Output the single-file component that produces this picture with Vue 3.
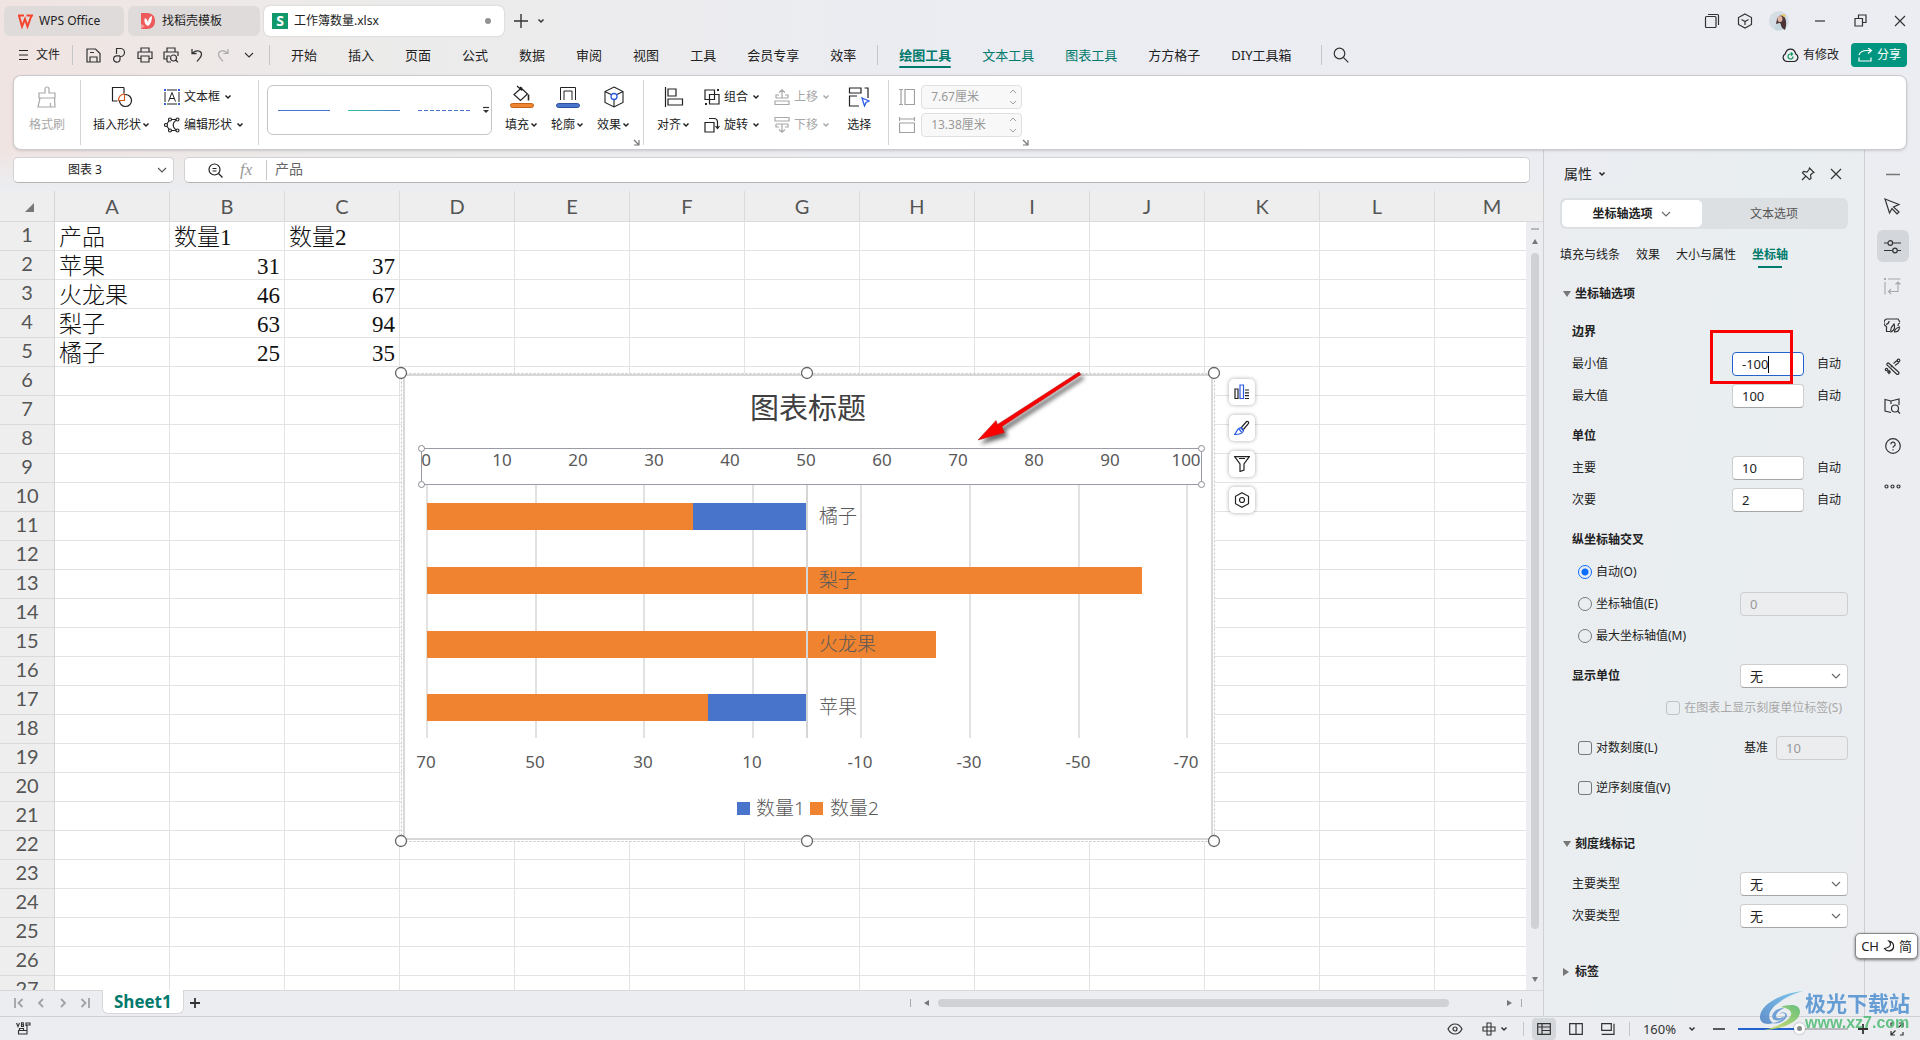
<script setup>
import { h, ref } from 'vue'

const icons = {
  chev: [8, 8, '<path d="M1.5 2.5 4 5l2.5-2.5" stroke-width="1.5"/>'],
  chevL: [12, 12, '<path d="M2 4l4 4 4-4" stroke-width="1.1"/>'],
  wps: [16, 16, '<path d="M1 2.5h6M9.500 2.500H16M2 2.500l3 11 3-7.500 2.500 7.500 4-11" stroke="#f5432c" stroke-width="2"/>'],
  dao: [14, 18, '<path d="M0 1h6c5 0 8 3 8 8s-3 8-8 8H0z" fill="#ee5a5c" stroke="none"/><path d="M0 12l4 2-4 3z" fill="#f89a9a" stroke="none"/><path d="M7 14C3 12 3 8 4 6c2 1 3 3 3 5 0-3 1-6 4-7 0 4-1 8-4 10z" fill="#fff" stroke="none"/>'],
  plus: [14, 14, '<path d="M7 0v14M0 7h14" stroke-width="1.4"/>'],
  menu: [9, 12, '<path d="M0 1.500h9M0 6h9M0 10.500h9" stroke-width="1"/>'],
  save: [15, 15, '<path d="M1 1h8.500L14 5.500V14H1zM4 14V9h7v5M4 4.500h4"/>'],
  exp: [14, 16, '<path d="M4.500 7V1.500h4a4 4 0 0 1 0 8H8M8 9.500V12a3.200 3.200 0 1 1-3.200-3.200H8"/>'],
  print: [16, 16, '<path d="M4 5V1h8v4M4 11.500H1V5h14v6.500h-3M4 9h8v6H4z"/>'],
  preview: [16, 16, '<path d="M4 5V1h8v4M4 12H1V5h14v4M4 15V9h3M4 15h4"/><circle cx="10.500" cy="11" r="3"/><path d="M12.800 13.300l2.200 2"/>'],
  undo: [14, 14, '<path d="M2 1v4.500h4.500M2.500 5.500C5 1.500 11.500 2 11.500 6.500c0 3-2.500 4-4.500 7" stroke-width="1.300"/>'],
  redo: [14, 14, '<path d="M12 1v4.500H7.500M11.500 5.500C9 1.500 2.500 2 2.500 6.500c0 3 2.500 4 4.500 7" stroke-width="1.200"/>'],
  search: [16, 16, '<circle cx="6.500" cy="6.500" r="5.300"/><path d="M10.300 10.300l5 5"/>'],
  pages: [16, 16, '<rect x="1.500" y="3.500" width="10.500" height="11" rx="1"/><path d="M4 1.500h9.500a1 1 0 0 1 1 1V12"/>'],
  cube: [16, 16, '<path d="M8 1l6.500 3.500v7L8 15l-6.500-3.500v-7zM4.500 6.500L8 8.500l3.500-2M8 8.500V12"/>'],
  min: [12, 12, '<path d="M1 6h10"/>'],
  restore: [13, 13, '<path d="M1 4.500h7.500V12H1zM4.500 4.500V1H12v7.500H8.500"/>'],
  close: [12, 12, '<path d="M1 1l10 10M11 1L1 11"/>'],
  cloud: [17, 15, '<path d="M5 13.500a4 4 0 0 1-1.800-7.500C4 3 6 1.200 8.500 1.200S13 3 13.800 6A4 4 0 0 1 12 13.500z"/><path d="M11 8.500A2.500 2.500 0 1 1 8.500 6l1.500 0M9 4.500L10.500 6 9 7.500" stroke="#0e9a5a"/>'],
  share: [15, 15, '<path d="M1 7c1-3 4-4.500 8-4.500h4M10 0l3.500 2.500L10 5.500M1 9.500V13h12V9.500"/>'],
  brush: [22, 24, '<path d="M9 8V4a2 2 0 0 1 4 0v4h6v5H3V8zM4 13L2 22h17l-.5-9M14.500 22v-4"/>'],
  shapes: [22, 22, '<path d="M13 1.500H1.500v13.500h5"/><path d="M13 1.500v6"/><circle cx="14.500" cy="14.500" r="6"/><path d="M7.500 14.500A6 6 0 0 1 13.500 8v6.500z" stroke="#d4571e" fill="#fff"/>'],
  textbox: [16, 16, '<path d="M3 1h10M3 15h10M1 3v10M15 3v10M4.500 12.500L8 3.500l3.500 9M5.800 9.500h4.400" stroke-width="1"/><path d="M0 0h2v2H0zM14 0h2v2h-2zM0 14h2v2H0zM14 14h2v2h-2z" fill="#2c5be8" stroke="none"/>'],
  edit: [16, 16, '<path d="M2 8l4-5.500M2 8l4 5.500M7 2.500h6M7 13.500h6M13 3c-5 2-5 8 0 10"/><g fill="#fff"><circle cx="2" cy="8" r="1.500"/><circle cx="6" cy="2.500" r="1.500"/><circle cx="6" cy="13.500" r="1.500"/><circle cx="13.500" cy="2.500" r="1.500"/><circle cx="13.500" cy="13.500" r="1.500"/></g>'],
  more: [8, 8, '<path d="M1 1.500h6" /><path d="M1 4h6L4 7z" fill="currentColor" stroke="none"/>'],
  fill: [24, 24, '<path d="M10 2l7.500 7-7 6.500L4 9.500 12 2.500M7 1l5 4.500"/><path d="M18.500 9.500v6" stroke-width="1.600"/><rect x=".5" y="18.500" width="23" height="4" rx="2" fill="#f08530" stroke="#c3621a" stroke-width="1"/>'],
  outline: [24, 24, '<path d="M4.500 15V2.500h15V15M8 15V6h8v9" stroke-width="1"/><rect x=".5" y="18.500" width="23" height="4" rx="2" fill="#4874cb" stroke="#2d529c" stroke-width="1"/>'],
  effect: [22, 22, '<path d="M11 1l9 4.500v11L11 21l-9-4.500v-11zM2 5.500l6 3M20 5.500l-6 3M11 14v7" stroke-width="1.100"/><circle cx="11" cy="10.500" r="3" stroke="#2c5be8" stroke-width="1.300"/>'],
  align: [20, 20, '<path d="M1.500 0v20M4 2h8v7H4zM4 12h14.500v6H4z"/>'],
  group: [16, 16, '<path d="M1 1h9.500v9.500H1zM5.500 5.500H15V15H5.500z"/><path d="M13 0h2v2h-2zM1 14h2v2H1z" fill="currentColor" stroke="none"/>'],
  rotate: [16, 16, '<path d="M1 5.500h9V15H1zM5 1.500h5c2.500 0 3.500 2 3.500 4V11M11.500 9l2 2.500L15.500 9"/>'],
  up: [16, 16, '<path d="M1 12h14v3.500H1zM2 9V6h3M14 9V6h-3M2 9h12M8 9V1M5 3.500L8 .800l3 2.700"/>'],
  down: [16, 16, '<path d="M1 .500h14V4H1zM2 7v3h3M14 7v3h-3M2 7h12M8 7v8M5 12.500l3 2.700 3-2.700"/>'],
  select: [22, 20, '<path d="M9 9H1.500v10H11M1.500 6V1H13v5zM16.500 1H20v10" stroke-width="1.200"/><path d="M14 11l7 3-3 1.500L16.500 19z" stroke="#2c5be8" fill="#fff" stroke-width="1.300"/>'],
  hgt: [16, 16, '<path d="M0 .500h4M0 15.500h4M2 .500v15M6 .500h9.500v15H6z"/>'],
  wid: [16, 16, '<path d="M.500 0v4M15.500 0v4M.500 2h15M.500 6h15v9.500H.500z"/>'],
  spin: [8, 16, '<path d="M1 4l3-3 3 3M1 12l3 3 3-3" stroke-width="1"/>'],
  launch: [7, 7, '<path d="M1 1l4.500 4.500M6 1v5H1" />'],
  zoomf: [15, 15, '<circle cx="6.500" cy="6.500" r="5.500"/><path d="M10.500 10.500l4 4M4.500 5.500h4M4.500 8h4"/>'],
  corner: [9, 9, '<path d="M9 0v9H0z" fill="#777" stroke="none"/>'],
  bars: [16, 16, '<path d="M1 5h3v9.500H1z"/><path d="M6 1h3.500v13.500H6z" stroke="#2c5be8"/><path d="M11 6h4M11 8.800h4M11 11.600h4M11 14.500h4"/>'],
  paint: [16, 16, '<path d="M7 8l5.500-6.500a1.500 1.500 0 0 1 2 2L9 10z"/><path d="M7 7.500l2.500 2.500c0 4-5 4.500-9 4.500 2.500-2 2-6.500 6.500-7zM5 9l2.500 3" stroke="#2c5be8"/>'],
  filter: [16, 16, '<path d="M.700 .700h14.600L10 8v6l-4 1.500V8zM5 2.500h6"/>'],
  gear: [16, 16, '<path d="M8 .700l6.500 3.600v7.400L8 15.300l-6.500-3.600V4.300z"/><circle cx="8" cy="8" r="2.500"/>'],
  pin: [14, 14, '<path d="M8.500 1l4.500 4.500-1.500.5-2 2 .5 3.500-1.500 1L1.500 6l1-1.500L6 5l2-2.500zM4.500 9.500L1 13"/>'],
  cursor: [17, 17, '<path d="M1 1l14 5.500-5.500 2.500 5.500 5-2 2-5-5.500L5.500 15z"/>'],
  props: [17, 15, '<path d="M0 4h4M9 4h8M0 11.500h8.500M13.500 11.500H17"/><circle cx="6.300" cy="4" r="2.300"/><circle cx="11" cy="11.500" r="2.300"/>'],
  swap: [17, 17, '<path d="M4 1h12.500M1 4v12.500M4.500 13.500H14V4M7 11l-2.500 2.500L7 16M11.500 6.500L14 4l2.500 2.500" stroke-width="1.100"/><path d="M0 0h2v2H0z" fill="currentColor" stroke="none"/>'],
  person: [17, 16, '<path d="M6 13.500H2.500V8.500A4 4 0 0 1 2.500 1H14l2 3M5 3c0 2-1 3-3 3.500M7 14c-1-3 1-6 3-8 1 3 1 6-3 8zM10.500 14c0-3 2-4 5-5 0 3-1 5-5 5zM14 8c0-2 1-3 2-3" stroke-width="1.200"/>'],
  wand: [17, 17, '<path d="M4.500 5L14.500 14a1.400 1.400 0 0 1-2 2L3 7a1.400 1.400 0 0 1 1.500-2zM7 9l1.500-1.500"/><path d="M9.500 5.500L13 2.500M11 7.500l4-3" stroke-width="1.100"/><circle cx="14.500" cy="2.500" r="1.300"/><circle cx="2.500" cy="11.500" r="1.200"/><path d="M5 12.500l1.300 1.500L5 15.500 3.700 14z"/>'],
  book: [17, 16, '<path d="M7 14.500L1 13V1.500l6 1.500 8-2v6M7 3v3"/><circle cx="11" cy="10.500" r="3.500"/><path d="M13.500 13l2.500 2.500"/>'],
  help: [16, 16, '<circle cx="8" cy="8" r="7.300"/><path d="M5.800 6.200a2.200 2.200 0 1 1 3.200 2c-.800.400-1 .800-1 1.600"/><path d="M8 11.200v1.400"/>'],
  dots: [17, 5, '<circle cx="2.500" cy="2.500" r="1.500"/><circle cx="8.500" cy="2.500" r="1.500"/><circle cx="14.500" cy="2.500" r="1.500"/>'],
  dash: [14, 3, '<path d="M0 1.500h14" stroke-width="1.500"/>'],
  first: [10, 10, '<path d="M1 0v10M8.500 1l-4 4 4 4" stroke-width="1.800"/>'],
  prev: [10, 10, '<path d="M7 1L3 5l4 4" stroke-width="1.800"/>'],
  next: [10, 10, '<path d="M3 1l4 4-4 4" stroke-width="1.800"/>'],
  last: [10, 10, '<path d="M9 0v10M1.500 1l4 4-4 4" stroke-width="1.800"/>'],
  add: [10, 10, '<path d="M5 0v10M0 5h10" stroke-width="1.800"/>'],
  macro: [15, 13, '<path d="M.5 1L2 4.500 3.500 1M5.500 .800v3.700h2V2.700h-2 1.800V.800zM10 4V1h4v2h-3v9H2.500V8.500h8M3.500 8.500v-2h4v2" stroke-width="1.100"/>'],
  eye: [16, 12, '<path d="M1 6c1.500-3 4-5 7-5s5.500 2 7 5c-1.500 3-4 5-7 5S2.500 9 1 6z"/><circle cx="8" cy="6" r="2"/>'],
  cross: [14, 14, '<path d="M5 5V1h4v4h4v4H9v4H5V9H1V5zM5 5h4v4H5z" stroke-width="1.100"/>'],
  vgrid: [14, 12, '<path d="M.700 .700h12.600v10.600H.700zM.700 4h12.600M5 .700v10.600M5 7.500h8"/>'],
  vbook: [14, 12, '<path d="M.700 .700h12.600v10.600H.700zM7 .700v10.600"/>'],
  vpage: [14, 12, '<path d="M.700 .700h9.600v6.600H.700zM13 .700v10.600H.700"/>'],
  minus: [12, 4, '<path d="M0 2h12" stroke-width="1.600"/>'],
  full: [14, 14, '<path d="M9 1h4v4M13 1L8.500 5.500M5 13H1V9M1 13l4.500-4.500M1 4V1h3M13 10v3h-3"/>'],
  moon: [12, 12, '<path d="M6 1c2.500 2.500 2.500 6-4.500 7.500 2 3.500 8 3 9-1C11.200 4 9 1.500 6 1z"/>'],
}
const Icon = (p) => {
  const [w, ht, d] = icons[p.n]
  return h('svg', {
    width: w, height: ht, viewBox: `0 0 ${w} ${ht}`, fill: 'none',
    stroke: 'currentColor', 'stroke-width': 1.2, 'aria-hidden': 'true', innerHTML: d,
  })
}
Icon.props = ['n']

const quick = ['save', 'exp', 'print', 'preview', 'undo', 'redo', 'chevL']
const menus = ['开始', '插入', '页面', '公式', '数据', '审阅', '视图', '工具', '会员专享', '效率']
const toolMenus = [
  { t: '绘图工具', c: 'on' }, { t: '文本工具', c: 'ctx' }, { t: '图表工具', c: 'ctx' },
  { t: '方方格子', c: '' }, { t: 'DIY工具箱', c: '' },
]
const cols = 'ABCDEFGHIJKLM'.split('')
const data = [['产品', '数量1', '数量2'], ['苹果', 31, 37], ['火龙果', 46, 67], ['梨子', 63, 94], ['橘子', 25, 35]]
const rows = Array.from({ length: 27 }, (_, r) => cols.map((_, c) => data[r]?.[c] ?? ''))

const topAxis = Array.from({ length: 11 }, (_, i) => ({ t: i * 10, x: 33 + i * 76 }))
const bottomAxis = [70, 50, 30, 10, -10, -30, -50, -70].map((t, i) => ({ t, x: 33 + Math.round(i * 108.6) }))
const bars = [
  { t: '橘子', y: 138, o: 266, b: 113 },
  { t: '梨子', y: 202, o: 715, b: 0 },
  { t: '火龙果', y: 266, o: 509, b: 0 },
  { t: '苹果', y: 329, o: 281, b: 98 },
]
const handles = [[8, 8], [414, 8], [821, 8], [8, 476], [414, 476], [821, 476]]
const chartTools = [['bars', '图表元素'], ['paint', '图表样式'], ['filter', '图表筛选器'], ['gear', '设置图表区域格式']]
const side = ['dash', 'cursor', 'props', 'swap', 'person', 'wand', 'book', 'help', 'dots']

const bounds = ref({ min: '-100', max: '100', major: '10', minor: '2' })
const cross = ref('auto')
const zoom = ref(57)
</script>

<template>
  <div class="app">
    <header class="titlebar">
      <button class="tab home"><Icon n="wps" />WPS Office</button>
      <button class="tab dao"><Icon n="dao" />找稻壳模板</button>
      <button class="tab doc"><span class="s-logo">S</span>工作簿数量.xlsx<i class="dot"></i></button>
      <button class="bare new" aria-label="新建"><Icon n="plus" /></button>
      <button class="bare" aria-label="更多标签"><Icon n="chev" /></button>
      <div class="win">
        <button class="bare" aria-label="窗口"><Icon n="pages" /></button>
        <button class="bare" aria-label="应用"><Icon n="cube" /></button>
        <button class="bare avatar" aria-label="账号">
          <svg width="20" height="20" viewBox="0 0 20 20">
            <circle cx="10" cy="10" r="10" fill="#d3dde3" />
            <path d="M8 8c1-4 6-5 8-1 2 4 1 9 0 12l-3-2-2-5-4 1z" fill="#4a3436" />
            <ellipse cx="11" cy="8" rx="2.500" ry="3" fill="#e0b6a6" />
            <path d="M12 4l3-1 2 2-2 1z" fill="#e2c65c" />
            <path d="M6 14l5-2 2 7H6z" fill="#c5d8e0" />
          </svg>
        </button>
        <button class="bare" aria-label="最小化"><Icon n="min" /></button>
        <button class="bare" aria-label="还原"><Icon n="restore" /></button>
        <button class="bare" aria-label="关闭"><Icon n="close" /></button>
      </div>
    </header>

    <nav class="menubar">
      <button class="bare file"><Icon n="menu" />文件</button>
      <i class="vr"></i>
      <div class="quick">
        <button v-for="q in quick" :key="q" class="bare" :class="{ off: q === 'redo' }" :aria-label="q"><Icon :n="q" /></button>
      </div>
      <i class="vr"></i>
      <div class="menus">
        <a v-for="m in menus" :key="m" href="#">{{ m }}</a>
      </div>
      <i class="vr mid"></i>
      <div class="menus tools">
        <a v-for="m in toolMenus" :key="m.t" href="#" :class="m.c">{{ m.t }}</a>
      </div>
      <i class="vr find"></i>
      <button class="bare" aria-label="搜索"><Icon n="search" /></button>
      <button class="bare state"><Icon n="cloud" />有修改</button>
      <button class="share"><Icon n="share" />分享</button>
    </nav>

    <section class="ribbon">
      <div class="grp g1">
        <button class="big off"><span><Icon n="brush" /></span><b>格式刷</b></button>
      </div>
      <i class="sep"></i>
      <div class="grp g2">
        <button class="big"><span><Icon n="shapes" /></span><b>插入形状<Icon n="chev" /></b></button>
        <div class="stack">
          <button class="row"><Icon n="textbox" />文本框<Icon n="chev" /></button>
          <button class="row"><Icon n="edit" />编辑形状<Icon n="chev" /></button>
        </div>
      </div>
      <i class="sep"></i>
      <div class="grp g3">
        <div class="gallery">
          <button aria-label="实线" class="ln blue"></button>
          <button aria-label="渐变线" class="ln grad"></button>
          <button aria-label="虚线" class="ln dashed"></button>
          <button aria-label="更多线型" class="bare"><Icon n="more" /></button>
        </div>
        <button class="big"><span><Icon n="fill" /></span><b>填充<Icon n="chev" /></b></button>
        <button class="big"><span><Icon n="outline" /></span><b>轮廓<Icon n="chev" /></b></button>
        <button class="big"><span><Icon n="effect" /></span><b>效果<Icon n="chev" /></b></button>
      </div>
      <button class="bare launch" aria-label="形状样式"><Icon n="launch" /></button>
      <i class="sep"></i>
      <div class="grp g4">
        <button class="big"><span><Icon n="align" /></span><b>对齐<Icon n="chev" /></b></button>
        <div class="stack">
          <button class="row"><Icon n="group" />组合<Icon n="chev" /></button>
          <button class="row"><Icon n="rotate" />旋转<Icon n="chev" /></button>
        </div>
        <div class="stack">
          <button class="row off"><Icon n="up" />上移<Icon n="chev" /></button>
          <button class="row off"><Icon n="down" />下移<Icon n="chev" /></button>
        </div>
        <button class="big pick"><span><Icon n="select" /></span><b>选择</b></button>
      </div>
      <i class="sep"></i>
      <div class="grp g5">
        <div class="stack">
          <label class="size"><Icon n="hgt" /><span><input value="7.67厘米" disabled aria-label="高度" /><Icon n="spin" /></span></label>
          <label class="size"><Icon n="wid" /><span><input value="13.38厘米" disabled aria-label="宽度" /><Icon n="spin" /></span></label>
        </div>
      </div>
      <button class="bare launch" aria-label="大小"><Icon n="launch" /></button>
    </section>

    <div class="main">
      <div class="work">
        <div class="fbar">
          <div class="namebox"><input value="图表 3" aria-label="名称框" /><Icon n="chevL" /></div>
          <div class="formula">
            <Icon n="zoomf" /><em>fx</em><i class="vr"></i>
            <input value="产品" aria-label="编辑栏" />
          </div>
        </div>

        <div class="sheet">
          <div class="cells">
            <table>
              <thead>
                <tr><th class="corner"><Icon n="corner" /></th><th v-for="c in cols" :key="c">{{ c }}</th></tr>
              </thead>
              <tbody>
                <tr v-for="(r, i) in rows" :key="i">
                  <th>{{ i + 1 }}</th>
                  <td v-for="(v, j) in r" :key="j" :class="{ num: typeof v === 'number' }">{{ v }}</td>
                </tr>
              </tbody>
            </table>

            <svg class="chart" width="830" height="486" viewBox="0 0 830 486">
              <defs>
                <filter id="sh" x="-20%" y="-20%" width="150%" height="150%">
                  <feDropShadow dx="3" dy="4" stdDeviation="2" flood-color="#000" flood-opacity="0.6" />
                </filter>
              </defs>
              <rect x="8.500" y="8.500" width="813" height="468" fill="#fff" stroke="#c4c4c8" stroke-dasharray="2 2" />
              <rect x="11" y="10" width="808" height="464" fill="#fff" stroke="#d8d8d8" stroke-width="2" />
              <text class="title" x="415" y="54">图表标题</text>
              <g fill="#e2e2e2">
                <rect v-for="a in bottomAxis" :key="a.t" :x="a.x" y="120" width="2" height="253" />
              </g>
              <g v-for="b in bars" :key="b.t">
                <rect x="34" :y="b.y" :width="b.o" height="27" fill="#ef832f" />
                <rect v-if="b.b" :x="34 + b.o" :y="b.y" :width="b.b" height="27" fill="#4874cb" />
              </g>
              <rect x="413" y="120" width="2" height="253" fill="#d6d6d6" />
              <text v-for="b in bars" :key="b.t" class="cat" x="426" :y="b.y + 20">{{ b.t }}</text>
              <rect x="28.500" y="83.500" width="780" height="36" fill="none" stroke="#9b9ba5" />
              <text v-for="a in topAxis" :key="a.t" class="ax" :x="a.x" y="101">{{ a.t }}</text>
              <text v-for="a in bottomAxis" :key="a.t" class="ax" :x="a.x" y="403">{{ a.t }}</text>
              <g fill="#fff" stroke="#8a8a90">
                <circle cx="28.500" cy="83.500" r="3" /><circle cx="808.500" cy="83.500" r="3" />
                <circle cx="28.500" cy="119.500" r="3" /><circle cx="808.500" cy="119.500" r="3" />
              </g>
              <rect x="344" y="437" width="13" height="13" fill="#4874cb" />
              <text class="cat" x="363" y="450">数量1</text>
              <rect x="417" y="437" width="13" height="13" fill="#ef832f" />
              <text class="cat" x="437" y="450">数量2</text>
              <g fill="#fff" stroke="#666" stroke-width="1.300">
                <circle v-for="(p, i) in handles" :key="i" :cx="p[0]" :cy="p[1]" r="5.500" />
              </g>
              <g filter="url(#sh)" fill="#fb0505" stroke="#a01010" stroke-width=".5">
                <path d="M686 7l2 2.500-79 52 1 3 1.500 3L585 75l18-19.500 1.500 4z" />
              </g>
            </svg>
            <div class="ctools">
              <button v-for="t in chartTools" :key="t[0]" :aria-label="t[1]"><Icon :n="t[0]" /></button>
            </div>
          </div>
          <div class="vs">
            <div class="vhead"></div>
            <i class="split"></i><i class="tri t-up"></i><i class="thumb"></i><i class="tri t-dn"></i>
          </div>
        </div>

        <div class="sheets">
          <div class="nav">
            <button class="bare" aria-label="第一张"><Icon n="first" /></button>
            <button class="bare" aria-label="上一张"><Icon n="prev" /></button>
            <button class="bare" aria-label="下一张"><Icon n="next" /></button>
            <button class="bare" aria-label="最后一张"><Icon n="last" /></button>
          </div>
          <button class="stab">Sheet1</button>
          <button class="bare addsheet" aria-label="新建工作表"><Icon n="add" /></button>
          <div class="hs"><i class="bar"></i><i class="tri t-l"></i><span><i class="thumb"></i></span><i class="tri t-r"></i><i class="bar"></i></div>
        </div>
      </div>

      <aside class="panel">
        <div class="phead">属性<Icon n="chev" /><button class="bare pinb" aria-label="固定"><Icon n="pin" /></button><button class="bare" aria-label="关闭窗格"><Icon n="close" /></button></div>
        <div class="seg"><button class="act">坐标轴选项<Icon n="chevL" /></button><button>文本选项</button></div>
        <div class="ptabs"><a href="#">填充与线条</a><a href="#">效果</a><a href="#">大小与属性</a><a href="#" class="on">坐标轴</a></div>

        <h3><i class="tri t-dn"></i>坐标轴选项</h3>
        <h4>边界</h4>
        <div class="prow"><label for="mn">最小值</label><span class="field mark"><input id="mn" v-model="bounds.min" class="focus" /><i class="caret"></i></span><span class="auto">自动</span></div>
        <div class="prow"><label for="mx">最大值</label><span class="field"><input id="mx" v-model="bounds.max" /></span><span class="auto">自动</span></div>
        <h4>单位</h4>
        <div class="prow"><label for="mj">主要</label><span class="field"><input id="mj" v-model="bounds.major" /></span><span class="auto">自动</span></div>
        <div class="prow"><label for="mi">次要</label><span class="field"><input id="mi" v-model="bounds.minor" /></span><span class="auto">自动</span></div>
        <h4>纵坐标轴交叉</h4>
        <div class="prow in"><label><input v-model="cross" type="radio" value="auto" />自动(O)</label></div>
        <div class="prow in"><label><input v-model="cross" type="radio" value="val" />坐标轴值(E)</label><span class="field wide"><input value="0" disabled aria-label="坐标轴值" /></span></div>
        <div class="prow in"><label><input v-model="cross" type="radio" value="max" />最大坐标轴值(M)</label></div>
        <div class="prow top"><label for="du" class="strong">显示单位</label><span class="field wide"><select id="du"><option>无</option></select><Icon n="chevL" /></span></div>
        <div class="prow lab"><label class="off"><input type="checkbox" disabled />在图表上显示刻度单位标签(S)</label></div>
        <div class="prow in top"><label><input type="checkbox" />对数刻度(L)</label><label for="base" class="base">基准</label><span class="field"><input id="base" value="10" disabled /></span></div>
        <div class="prow in top"><label><input type="checkbox" />逆序刻度值(V)</label></div>
        <h3 class="next"><i class="tri t-dn"></i>刻度线标记</h3>
        <div class="prow top"><label for="t1">主要类型</label><span class="field wide"><select id="t1"><option>无</option></select><Icon n="chevL" /></span></div>
        <div class="prow"><label for="t2">次要类型</label><span class="field wide"><select id="t2"><option>无</option></select><Icon n="chevL" /></span></div>
        <h3 class="next"><i class="tri t-r"></i>标签</h3>
      </aside>

      <aside class="side">
        <button v-for="s in side" :key="s" class="bare" :class="[s, { on: s === 'props', off: s === 'swap' }]" :aria-label="s"><Icon :n="s" /></button>
      </aside>
    </div>

    <footer class="status">
      <button class="bare" aria-label="宏"><Icon n="macro" /></button>
      <div class="views">
        <button class="bare" aria-label="护眼模式"><Icon n="eye" /></button>
        <button class="bare crossb" aria-label="阅读模式"><Icon n="cross" /><Icon n="chev" /></button>
        <i class="vr"></i>
        <button class="bare v on" aria-label="普通视图"><Icon n="vgrid" /></button>
        <button class="bare v" aria-label="分页预览"><Icon n="vbook" /></button>
        <button class="bare v" aria-label="页面布局"><Icon n="vpage" /></button>
        <i class="vr"></i>
        <button class="bare pct">160%<Icon n="chev" /></button>
        <button class="bare" aria-label="缩小"><Icon n="minus" /></button>
        <input v-model="zoom" type="range" min="0" max="100" aria-label="缩放" />
        <button class="bare" aria-label="放大"><Icon n="add" /></button>
        <button class="bare fullb" aria-label="全屏"><Icon n="full" /></button>
      </div>
    </footer>

    <div class="ime">CH <Icon n="moon" /> 简</div>
    <div class="wm">
      <svg width="44" height="40" viewBox="0 0 44 40">
        <defs>
          <linearGradient id="wa" x1="0" y1="1" x2="1" y2="0"><stop offset="0" stop-color="#4a7fc4" /><stop offset="1" stop-color="#6cc3ee" /></linearGradient>
          <linearGradient id="wb" x1="0" y1="1" x2="1" y2="0"><stop offset="0" stop-color="#d7dc58" /><stop offset="1" stop-color="#4fb86a" /></linearGradient>
        </defs>
        <path d="M44 0C22 2 0 14 1 27c1 6 7 7 13 5C8 28 9 20 18 13 25 7 34 3 44 0z" fill="url(#wa)" />
        <path d="M25 17c-8 0-14 6-11 11 3 3 10 1 12-3 1-3-3-4-5-2 0-2 6-3 7 1 0 5-8 10-16 8 8-1 12-3 13-7-3 3-8 3-8 0 0-3 4-6 8-8z" fill="#5e94d2" />
        <path d="M22 16c8-3 18-3 19 4 1 9-14 18-36 19 13-3 25-9 27-15 1-5-4-7-10-8z" fill="url(#wb)" />
      </svg>
      <div><strong>极光下载站</strong><span>www.xz7.com</span></div>
    </div>
  </div>
</template>

<style>
body { margin: 0; overflow: hidden; }
</style>

<style scoped>
*, *::after { box-sizing: border-box; }
.app {
  position: relative; display: flex; flex-direction: column; height: 100vh; overflow: hidden;
  background: linear-gradient(to right, #f0e4e2 0, #ecebea 18%, #ebecf1 45%, #ebedf2 100%);
  font: 12px/20px "Noto Sans", "Noto Sans CJK SC", sans-serif; color: #222;
}
button { font: inherit; color: inherit; border: 0; padding: 0; background: none; display: flex; align-items: center; }
svg { flex: none; }
a { color: inherit; text-decoration: none; }
input, select { font: inherit; color: inherit; }
.bare { justify-content: center; color: #333; }
.off { color: #a8a8a8 !important; }
.vr { width: 1px; height: 20px; background: #c6c6c9; flex: none; }

.titlebar { display: flex; align-items: center; height: 37px; padding: 4px 0 0 4px; gap: 4px; flex: none; }
.tab { height: 30px; border-radius: 6px; background: #dfdbda; padding: 0 13px; gap: 6px; }
.home { width: 120px; }
.dao { width: 132px; gap: 7px; }
.doc { width: 240px; background: #fff; padding: 0 8px; box-shadow: 0 0 2px #0003; }
.s-logo { width: 16px; height: 16px; background: #12996b; color: #fff; font-weight: 700; font-size: 14px; line-height: 16px; text-align: center; }
.dot { width: 6px; height: 6px; border-radius: 50%; background: #929292; margin-left: auto; margin-right: 5px; }
.new { margin: 0 5px 0 6px; }
.win { margin-left: auto; display: flex; }
.win .bare { width: 40px; height: 30px; }
.win .bare:nth-child(1), .win .bare:nth-child(2) { width: 33px; }
.avatar { width: 36px !important; margin-right: 3px; }

.menubar { display: flex; align-items: center; height: 38px; padding: 0 13px 2px 19px; flex: none; }
.file { gap: 8px; margin-right: 12px; color: #222; }
.quick { display: flex; padding: 0 7px; }
.quick .bare { width: 26px; height: 24px; }
.menus { display: flex; gap: 31px; padding: 0 21px; font-size: 13px; }
.menus a { position: relative; white-space: nowrap; }
.tools { padding-right: 29px; }
.ctx, .menus .on { color: #007a6c; }
.menus .on { font-weight: 700; }
.menus .on::after { content: ""; position: absolute; left: 0; right: 0; bottom: -3px; height: 2px; background: #007a6c; border-radius: 1px; }
.find { margin-right: 11px; }
.state { margin-left: auto; gap: 4px; margin-right: 12px; color: #222; }
.share { height: 24px; padding: 0 6px 0 7px; gap: 4px; border-radius: 4px; background: #00957f; color: #fff; }

.ribbon { position: relative; z-index: 1; display: flex; margin: 0 13px; min-height: 75px; background: #fff; border: 1px solid #cbcbcf; border-radius: 8px; box-shadow: 0 1px 3px #0002; flex: none; }
.sep { width: 1px; margin: 4px 0; background: #d4d4d4; }
.grp { display: flex; align-items: flex-start; padding-top: 9px; }
.big { flex-direction: column; gap: 4px; }
.big span, .big b { display: flex; align-items: center; justify-content: center; height: 24px; font-weight: 400; gap: 1px; white-space: nowrap; }
.stack { display: flex; flex-direction: column; gap: 4px; }
.row { height: 24px; gap: 4px; white-space: nowrap; }
.g1 { width: 66px; justify-content: center; }
.g2 { padding-left: 12px; padding-right: 14px; gap: 14px; }
.g3 { padding-left: 8px; gap: 13px; }
.gallery { display: flex; align-items: center; width: 225px; height: 50px; padding-left: 10px; gap: 18px; border: 1px solid #c4c4c8; border-radius: 6px; }
.gallery .bare { margin-left: -6px; }
.ln { width: 52px; height: 1px; }
.blue { background: #4874cb; }
.grad { background: linear-gradient(to right, #30c0a0, #4874cb); }
.dashed { background: repeating-linear-gradient(to right, #4874cb 0 4px, transparent 4px 6px); }
.launch { align-self: flex-end; width: 13px; height: 13px; color: #777; }
.g5 + .launch { width: 7px; }
.g4 { padding: 9px 17px 0 13px; gap: 14px; }
.pick { margin-left: 3px; }
.g5 { padding-left: 10px; }
.size { display: flex; align-items: center; gap: 6px; color: #a0a0a0; }
.size span { display: flex; align-items: center; width: 101px; height: 24px; padding: 0 4px 0 9px; border: 1px solid #e0e0e0; border-radius: 4px; background: #f8f8f8; }
.size input { flex: 1; min-width: 0; border: 0; padding: 0; background: none; color: #999; }

.main { flex: 1; min-height: 0; display: flex; background: linear-gradient(to bottom, transparent, #ebedf1 40px); }
.work { flex: 1; min-width: 0; display: flex; flex-direction: column; }
.fbar { display: flex; gap: 10px; padding: 7px 13px 8px; }
.namebox, .formula { display: flex; align-items: center; height: 26px; background: #fff; border: 1px solid #d2d2d4; border-bottom-color: #b4b4b6; border-radius: 5px; }
.namebox { width: 161px; padding-right: 5px; color: #555; }
.namebox input { flex: 1; min-width: 0; border: 0; padding: 0; background: none; text-align: center; color: #222; }
.formula { flex: 1; padding-left: 23px; }
.formula em { font: italic 17px/20px "Liberation Serif", serif; color: #999; width: 26px; margin-left: 17px; }
.formula input { flex: 1; border: 0; padding: 0 8px 2px; font-size: 14px; color: #666; background: none; }

.sheet { flex: 1; min-height: 0; display: flex; }
.cells { position: relative; flex: 1; min-width: 0; overflow: hidden; background: #fff; }
table { table-layout: fixed; width: 1550px; border-collapse: separate; border-spacing: 0; }
th { width: 115px; height: 29px; padding: 0 0 4px; background: #eee; border: solid #dadada; border-width: 0 1px 1px 0; font: 20px/24px Lato, sans-serif; color: #555; }
thead th { height: 31px; padding: 0; }
th.corner { width: 55px; text-align: right; padding: 0 20px 0 0; line-height: 9px; }
th.corner, tbody th { border-right-color: #d6d6d6; }
td { height: 29px; padding: 3px 4px 0; border: solid #e3e3e3; border-width: 0 1px 1px 0; font: 300 23px/25px "Liberation Serif", "Noto Sans CJK SC", serif; color: #111; white-space: nowrap; }
.num { text-align: right; }
.chart { position: absolute; left: 393px; top: 174px; }
.chart text { fill: #595959; }
.title { font: 29px "Noto Sans CJK SC", sans-serif; text-anchor: middle; fill: #404040 !important; }
.ax { font: 17px "Noto Sans", sans-serif; text-anchor: middle; }
.cat { font: 300 19px "Noto Sans", "Noto Sans CJK SC", sans-serif; }
.ctools { position: absolute; left: 1229px; top: 188px; display: flex; flex-direction: column; gap: 10px; }
.ctools button { width: 26px; height: 26px; justify-content: center; background: #fff; border-radius: 5px; box-shadow: 0 0 4px #0005; }
.vs { width: 17px; display: flex; flex-direction: column; align-items: center; padding-bottom: 8px; }
.vhead { width: 17px; height: 31px; background: #eee; border-bottom: 1px solid #dadada; }
.split { width: 8px; height: 2px; background: #b8b8bc; margin: 6px 0 9px; }
.tri { width: 0; height: 0; border: 3px solid transparent; flex: none; }
.t-up { border-bottom: 5px solid #777; border-top: 0; margin-bottom: 9px; }
.t-dn { border-top: 5px solid #777; border-bottom: 0; }
.t-l { border-right: 5px solid #777; border-left: 0; }
.t-r { border-left: 5px solid #777; border-right: 0; }
.thumb { background: #d0d1d5; border-radius: 4px; }
.vs .thumb { width: 8px; flex: 1; margin-bottom: 48px; }

.sheets { display: flex; height: 26px; border-top: 1px solid #d8d8da; align-items: flex-start; flex: none; }
.nav { display: flex; padding-left: 8px; width: 102px; height: 24px; }
.nav .bare { width: 22px; color: #a2a2a6; }
.stab { height: 24px; margin-top: -1px; padding: 0 11px; background: #fff; border: 1px solid #d8d8da; border-top: 0; border-radius: 0 0 6px 6px; font: 700 17px/22px "Open Sans", sans-serif; color: #007a6c; }
.addsheet { height: 24px; margin-left: 6px; }
.hs { width: 41%; margin-left: auto; display: flex; align-items: center; height: 24px; padding-right: 17px; gap: 9px; }
.hs span { flex: 1; display: flex; padding: 0 49px 0 0; }
.hs .thumb { flex: 1; height: 8px; }
.hs .bar { width: 1px; height: 8px; background: #a8a8ac; margin: 0 4px 0 0; }

.panel { width: 321px; flex: none; border-left: 1px solid #cfd0d3; padding: 0 16px; background: linear-gradient(100deg, transparent, #e9eef0 50%, transparent); }
.phead { display: flex; align-items: center; height: 48px; padding: 0 6px 0 4px; gap: 6px; font-size: 14px; }
.pinb { margin-left: auto; margin-right: 9px; }
.seg { display: flex; height: 31px; padding: 2px; border-radius: 6px; background: #dde0e3; }
.seg button { flex: 1; justify-content: center; gap: 7px; color: #555; border-radius: 5px; }
.seg .act { flex: 0 0 140px; background: #fff; color: #222; font-weight: 700; }
.seg svg { color: #666; }
.ptabs { display: flex; gap: 16px; padding: 16px 0 13px; }
.ptabs a { position: relative; white-space: nowrap; }
.ptabs .on { color: #007a6c; font-weight: 700; }
.ptabs .on::after { content: ""; position: absolute; left: 6px; right: 6px; bottom: -3px; height: 2px; background: #007a6c; }
h3, h4 { margin: 0; font-size: 12px; line-height: 32px; font-weight: 700; }
h3 { display: flex; align-items: center; gap: 4px; padding-left: 3px; }
h3 .tri { border-width: 4px; }
h3 .t-dn { border-top-width: 6px; border-bottom-width: 0; }
h3 .t-r { border-left-width: 6px; border-right-width: 0; margin-right: 2px; }
h3.next { margin-top: 24px; }
h4 { margin-top: 8px; padding-left: 12px; }
h3 + h4 { margin-top: 6px; }
.prow { display: flex; align-items: center; height: 32px; padding-left: 12px; }
.prow.in { padding-left: 18px; }
.prow.top { margin-top: 8px; }
.prow label { display: flex; align-items: center; gap: 4px; white-space: nowrap; }
.prow.lab { justify-content: flex-end; padding-right: 6px; }
.prow .base { margin-left: auto; }
.strong { font-weight: 700; }
.field { position: relative; display: flex; align-items: center; width: 72px; margin-left: auto; }
.base + .field { margin-left: 8px; }
.wide { width: 108px; }
.field input, .field select { width: 100%; height: 24px; padding: 0 9px; font-size: 13px; border: 1px solid #cdced1; border-bottom-color: #a5a6a9; border-radius: 4px; background: #fff; appearance: none; outline: 0; }
.field input:disabled { background: #ebedef; border-color: #cdced1; color: #999; }
.field svg { position: absolute; right: 6px; color: #666; pointer-events: none; }
.field .focus { border-color: #2462cf; }
.caret { position: absolute; left: 36px; top: 4px; width: 1px; height: 17px; background: #000; }
.mark::after { content: ""; position: absolute; left: -22px; top: -22px; width: 83px; height: 54px; border: 3px solid #fb0000; }
.auto { width: 44px; padding-left: 13px; white-space: nowrap; }
[type=radio], [type=checkbox] { appearance: none; width: 14px; height: 14px; margin: 0; border: 1px solid #77787c; }
[type=radio] { border-radius: 50%; }
[type=checkbox] { border-radius: 3px; }
[type=checkbox]:disabled { border-color: #c2c3c6; }
[type=radio]:checked { border-color: #0a6cff; background: radial-gradient(#0a6cff 0 3px, transparent 4px); }

.side { width: 56px; flex: none; border-left: 1px solid #cfd0d3; display: flex; flex-direction: column; align-items: center; gap: 8px; padding-top: 16px; }
.side .bare { width: 32px; height: 32px; border-radius: 6px; flex: none; }
.side .on { background: #d3d6da; }
.side .dash { height: 16px; color: #777; }

.status { display: flex; align-items: center; height: 24px; border-top: 1px solid #cfd0d3; padding: 0 16px; background: #ebedf1; flex: none; }
.status > .bare { height: 22px; }
.views { margin-left: auto; display: flex; align-items: center; height: 22px; }
.crossb { gap: 4px; margin: 0 15px 0 19px; }
.v { width: 24px; height: 22px; margin-left: 8px; border-radius: 4px; }
.v.on { background: #d3d6da; }
.v + .vr { margin: 0 13px 0 9px; }
.status .vr { height: 14px; }
.pct { gap: 12px; margin-right: 17px; font-size: 13px; }
[type=range] { appearance: none; width: 110px; height: 12px; margin: 0 10px 0 13px; background: linear-gradient(to right, #2462cf 0 57%, #b9babd 57%) center / 100% 2px no-repeat; }
[type=range]::-webkit-slider-thumb { appearance: none; width: 11px; height: 11px; border-radius: 50%; border: 3px solid #fff; background: #888; box-shadow: 0 0 2px #0006; }
.fullb { margin: 0 0 0 22px; }

.ime { position: absolute; z-index: 2; right: 2px; bottom: 81px; display: flex; align-items: center; gap: 4px; height: 26px; padding: 0 5px; border: 1px solid #888; border-radius: 5px; background: #fff; font-size: 13px; box-shadow: 0 1px 3px #0008; }
.wm { position: absolute; z-index: 3; right: 10px; bottom: 8px; display: flex; align-items: center; pointer-events: none; opacity: .85; }
.wm div { display: flex; flex-direction: column; margin-left: 2px; }
.wm strong { font: 700 21px/24px "Noto Sans CJK SC", sans-serif; color: #4e8fd0; }
.wm span { font: 700 16px/18px "Liberation Sans", sans-serif; color: #4dbb72; }
</style>
